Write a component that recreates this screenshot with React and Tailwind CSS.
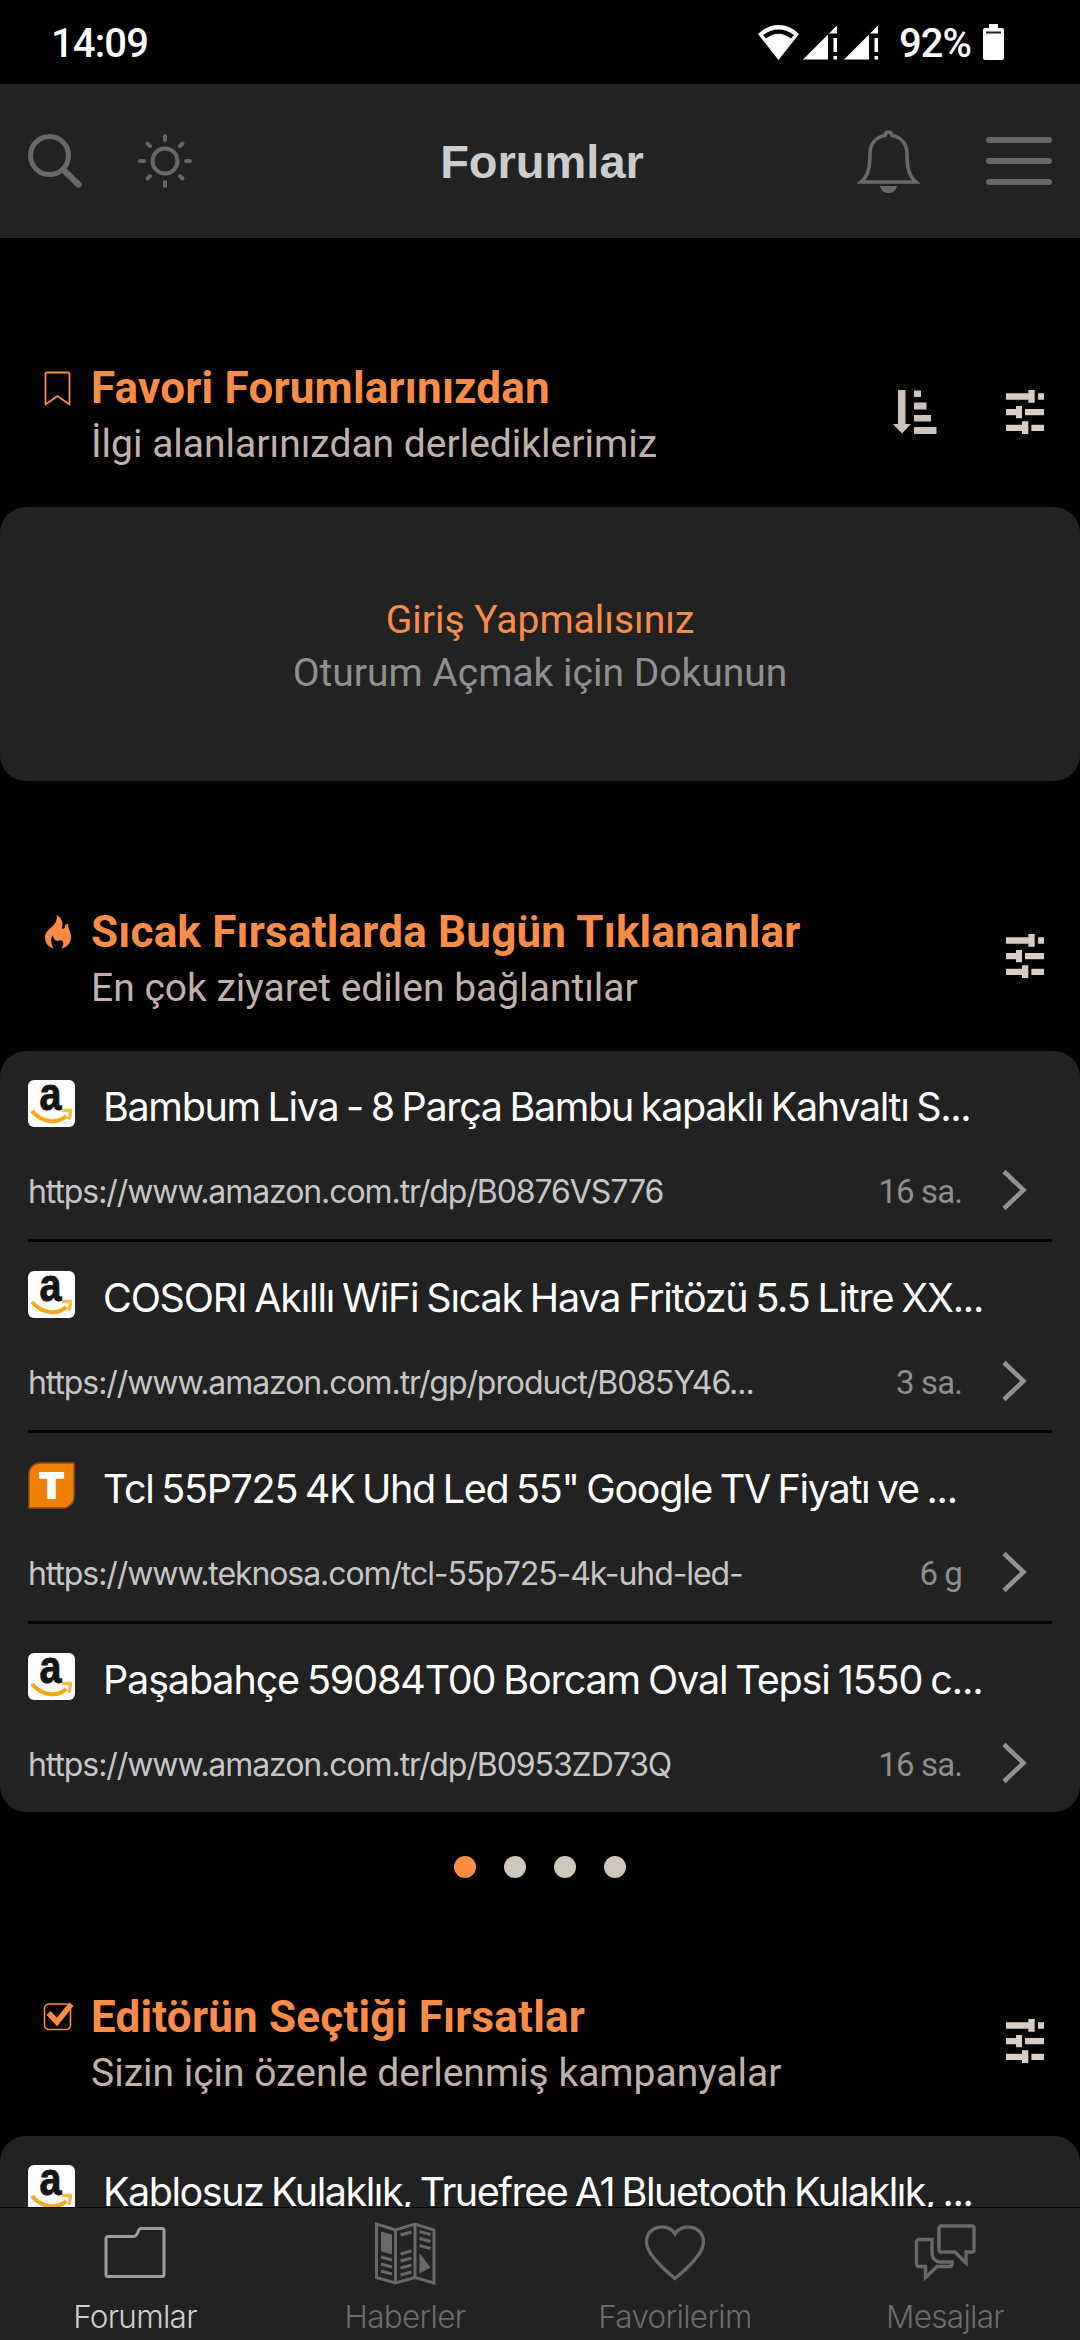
import React from 'react'

const hotDeals = [
  { logo: 'amazon', title: 'Bambum Liva - 8 Parça Bambu kapaklı Kahvaltı S...', tracking: 'tracking-[-1.330px]', url: 'https://www.amazon.com.tr/dp/B0876VS776', time: '16 sa.' },
  { logo: 'amazon', title: 'COSORI Akıllı WiFi Sıcak Hava Fritözü 5.5 Litre XX...', tracking: 'tracking-[-1.220px]', url: 'https://www.amazon.com.tr/gp/product/B085Y46...', time: '3 sa.' },
  { logo: 'teknosa', title: 'Tcl 55P725 4K Uhd Led 55" Google TV Fiyatı ve ...', tracking: 'tracking-[-1.330px]', url: 'https://www.teknosa.com/tcl-55p725-4k-uhd-led-', time: '6 g' },
  { logo: 'amazon', title: 'Paşabahçe 59084T00 Borcam Oval Tepsi 1550 c...', tracking: 'tracking-[-1.130px]', url: 'https://www.amazon.com.tr/dp/B0953ZD73Q', time: '16 sa.' }
]

const editorDeals = [
  { logo: 'amazon', title: 'Kablosuz Kulaklık, Truefree A1 Bluetooth Kulaklık, ...', tracking: 'tracking-[-1.470px]' }
]

const SignalIcon = () => (
  <svg width="35" height="35" viewBox="0 0 35 35" fill="#fff">
    <path d="M0 34.5 25 9.500V34.500Z" />
    <path d="M26 8.500 34 .5V8.500Z" />
    <path d="M30.500 13h3.500v14h-3.500zM30.500 31h3.500v3.500h-3.500z" />
  </svg>
)

const StatusBar = () => (
  <div className="h-[84px] flex items-center justify-between pl-[51px] pr-[76px] text-white">
    <span className="pt-[3px] text-[40px] leading-none font-medium tracking-[-0.900px]">14:09</span>
    <div className="flex items-center">
      <svg width="41" height="35" viewBox="0 0 41 35" className="mr-1">
        <path d="M0 9C12 -3 29 -3 41 9L20.500 35Z" fill="#fff" />
        <path d="M5 10C14 2.500 27 2.500 36 10L33 13.500C25 7 16 7 8 13.500Z" fill="#000" />
      </svg>
      <SignalIcon />
      <div className="w-[6px]" />
      <SignalIcon />
      <span className="pt-[3px] ml-[20px] mr-[12px] text-[40px] leading-none font-medium tracking-[-1px]">92%</span>
      <svg width="21" height="36" viewBox="0 0 21 36">
        <path d="M6 0h9v4h4a2 2 0 0 1 2 2v28a2 2 0 0 1-2 2H2a2 2 0 0 1-2-2V6a2 2 0 0 1 2-2h4z" fill="#fff" />
        <rect x="3" y="7.500" width="15" height="2" fill="#222" />
      </svg>
    </div>
  </div>
)

const Header = () => (
  <header className="h-[154px] shrink-0 bg-[#222] grid grid-cols-3 items-center px-7 text-[#686868]">
    <div className="flex items-center gap-14">
      <svg width="54" height="54" viewBox="0 0 54 54" fill="none" stroke="currentColor" strokeLinecap="round">
        <circle cx="21.500" cy="21.500" r="19" strokeWidth="5" />
        <path d="M35.500 36 50.500 50.500" strokeWidth="6.500" />
      </svg>
      <svg width="54" height="54" viewBox="0 0 54 54" fill="none" stroke="currentColor" strokeWidth="4" strokeLinecap="round">
        <circle cx="27" cy="27" r="12.500" />
        <path d="M27 2v4M27 48v4M2 27h4M48 27h4M9.500 9.500l2.500 2.500M42 42l2.500 2.500M9.500 44.500l2.500-2.500M42 12l2.500-2.500" />
      </svg>
    </div>
    <h1 className="pt-px pl-1 text-center font-bold text-[47px] leading-none text-[#ccc] font-['Liberation_Sans',sans-serif]">Forumlar</h1>
    <div className="flex items-center justify-end gap-[66px]">
      <svg width="63" height="63" viewBox="0 0 63 63" fill="none" stroke="currentColor" strokeWidth="3.600">
        <path d="M28 5.500C28.500 1 34.500 1 35 5.500C45 7.500 50 14.500 50 24C50 38 52 46 59 52H4C11 46 13 38 13 24C13 14.500 18 7.500 28 5.500Z" />
        <path d="M23 56h17c-1 4.500-4 7-8.500 7s-7.500-2.500-8.500-7z" fill="currentColor" stroke="none" />
      </svg>
      <div className="flex flex-col gap-[15px]">
        <div className="w-[66px] h-[6px] rounded-full bg-current" />
        <div className="w-[66px] h-[6px] rounded-full bg-current" />
        <div className="w-[66px] h-[6px] rounded-full bg-current" />
      </div>
    </div>
  </header>
)

const TuneIcon = () => (
  <svg width="38" height="44" viewBox="0 0 114 132" fill="#d7ccc6">
    <path d="M0 10h67v19H0zM67 0h19v38H67zM96 10h18v19H96z" />
    <path d="M0 57h30v19H0zM30 48h18v37H30zM57 57h57v19H57z" />
    <path d="M0 104h48v19H0zM48 94h19v38H48zM76 104h38v19H76z" />
  </svg>
)

const SortIcon = () => (
  <svg width="44" height="44" viewBox="0 0 44 44" fill="#cdc2bc">
    <path d="M5 0h7.500v34H18L9 43.500 0 34h5z" />
    <path d="M21 0.500h7V7H21zM21 12.500h12.500V19.500H21zM21 25h17v6.500H21zM21 37h22.500V44H21z" />
  </svg>
)

const BookmarkIcon = () => (
  <svg width="30" height="35" viewBox="0 0 30 35" fill="none" stroke="#fb8c46" strokeWidth="1.800" strokeLinejoin="round">
    <path d="M2.500 33.500V3a1.500 1.500 0 0 1 1.500-1.500h21A1.500 1.500 0 0 1 26.500 3v30.500L14.500 25z" />
  </svg>
)

const FlameIcon = () => (
  <svg width="26" height="34" viewBox="27 27 78 102" fill="#fb8c46" className="ml-[2px]">
    <path d="M62 27C76 34 84 50 77 67C83 70 88 65 87 60C88 56 92 54 97 54C94 64 105 76 105 92C105 110 94 124 76 127C84 118 84 108 76 103C68 104 56 106 55 98C52 95 50 90 53 87C46 90 44 100 46 108C46 116 50 124 54 128C38 124 27 112 27 94C27 80 36 74 46 64C60 52 64 42 62 27Z" />
  </svg>
)

const CheckIcon = () => (
  <svg width="32" height="35" viewBox="0 0 32 35" fill="none" stroke="#fb8c46">
    <rect x="1.500" y="4" width="26" height="25.500" rx="4.500" strokeWidth="1.600" />
    <path d="M5.500 13l8.500 9L28.500 4" strokeWidth="5.500" />
  </svg>
)

const SectionHeader = ({ icon, title, subtitle, sortable }) => (
  <div className="flex pl-[43px] pr-[36px] pb-[37px]">
    <div className="w-[48px] pt-[9px]">{icon}</div>
    <div className="flex-1">
      <h2 className="text-[44px] leading-[52px] font-bold tracking-[0.200px] text-[#fb8c46] whitespace-nowrap">{title}</h2>
      <p className="mt-1 text-[39px] leading-[52px] text-[#c0b2aa] whitespace-nowrap">{subtitle}</p>
    </div>
    <div className="flex gap-[69px] pt-[28px]">
      {sortable && <SortIcon />}
      <TuneIcon />
    </div>
  </div>
)

const AmazonLogo = () => (
  <svg width="47" height="47" viewBox="0 0 47 47">
    <rect width="47" height="47" rx="6" fill="#fff" />
    <text transform="translate(22.500 29.500) scale(.84 1)" textAnchor="middle" fontFamily="Liberation Sans, sans-serif" fontWeight="700" fontSize="47" fill="#151515" stroke="#151515" strokeWidth="1">a</text>
    <path d="M4 31C14 43 30 44 38 36" fill="none" stroke="#ffa618" strokeWidth="4" />
    <path d="M34 30.500h8.500c0 4-.5 6-2 9" fill="none" stroke="#ffb94c" strokeWidth="3.500" />
  </svg>
)

const TeknosaLogo = () => (
  <svg width="47" height="47" viewBox="0 0 47 47">
    <path d="M12 1h34v34a11 11 0 0 1-11 11H1V12A11 11 0 0 1 12 1z" fill="#f08000" stroke="#8c5010" strokeWidth="1.500" />
    <text x="23.500" y="36" textAnchor="middle" fontFamily="DejaVu Sans, sans-serif" fontWeight="700" fontSize="34" fill="#fff" stroke="#fff" strokeWidth="2">T</text>
  </svg>
)

const DealRow = ({ deal }) => (
  <div className="h-[191px] last:h-[188px] pt-[29px]">
    <div className="flex items-start gap-[28px] h-[47px]">
      {deal.logo === 'amazon' ? <AmazonLogo /> : <TeknosaLogo />}
      <span className={`mt-[4px] font-['Inter',sans-serif] text-[39.500px] leading-[47px] [word-spacing:-2px] text-white whitespace-nowrap ${deal.tracking}`}>{deal.title}</span>
    </div>
    {deal.url && (
      <div className="mt-[43px] h-[40px] flex items-center">
        <span className="flex-1 pt-[3px] font-['Inter',sans-serif] text-[32px] leading-[40px] tracking-[-1.080px] text-[#c6c6c6] whitespace-nowrap">{deal.url}</span>
        <span className="pt-[3px] text-[33px] leading-[40px] tracking-[-0.900px] text-[#8e8e8e]">{deal.time}</span>
        <svg width="26" height="42" viewBox="0 0 26 42" className="ml-[40px] mr-[24px]" fill="none" stroke="#929292" strokeWidth="4.500">
          <path d="M2 2.500 21.500 21 2 39.500" />
        </svg>
      </div>
    )}
  </div>
)

const DealCard = ({ deals }) => (
  <div className="bg-[#222] rounded-[26px] px-7 divide-y-[3px] divide-black">
    {deals.map(deal => (
      <DealRow key={deal.title} deal={deal} />
    ))}
  </div>
)

const FolderIcon = () => (
  <svg width="64" height="64" viewBox="0 0 64 64" fill="none" stroke="#9d9d9d" strokeWidth="3">
    <path d="M5 15.500h25c6 0 4-8 8-8h21a2 2 0 0 1 2 2v44a2 2 0 0 1-2 2H5a2 2 0 0 1-2-2v-36a2 2 0 0 1 2-2z" />
  </svg>
)

const NewsIcon = () => (
  <svg width="64" height="64" viewBox="0 0 64 64" fill="none" stroke="#686868" strokeWidth="3">
    <path d="M3.500 3 22.500 9 42 3 61 9V62L42 56.500 22.500 62 3.500 56.500ZM22.500 9V62M42 3V56.500" />
    <path d="M8 10.500l11 3V33.500l-11-3z" fill="#686868" stroke="none" />
    <path d="M8 36l11 3M8 43l11 3M8 50l11 3M27.500 14l11-3M27.500 33l11-3M27.500 40l11-3M27.500 47l11-3M27.500 54l11-3M46.500 10.500l11 3M46.500 17.500l11 3M46.500 24.500l11 3" />
    <path d="M46.500 32 57.500 46.500 46.500 52.500z" fill="#686868" stroke="none" />
  </svg>
)

const HeartIcon = () => (
  <svg width="64" height="64" viewBox="0 0 64 64" fill="none" stroke="#686868" strokeWidth="3.400">
    <path d="M32 57.500C18 46 3.500 32 3.500 21C3.500 4.500 25 1 32 13C39 1 60.500 4.500 60.500 21C60.500 32 46 46 32 57.500Z" />
  </svg>
)

const ChatIcon = () => (
  <svg width="64" height="64" viewBox="0 0 64 64" fill="none" stroke="#686868" strokeWidth="3.400">
    <path d="M28 5h31a2 2 0 0 1 2 2v22a2 2 0 0 1-2 2h-6v11L42 31H28a2 2 0 0 1-2-2V7a2 2 0 0 1 2-2z" />
    <path d="M19 18.500H6a2.500 2.500 0 0 0-2.500 2.500v22a2.500 2.500 0 0 0 2.500 2.500h6.500v11L24 45.500h13a2 2 0 0 0 2-2V41H27c-4 0-8-4-8-8z" />
  </svg>
)

const tabs = [
  { label: 'Forumlar', icon: <FolderIcon />, active: true },
  { label: 'Haberler', icon: <NewsIcon /> },
  { label: 'Favorilerim', icon: <HeartIcon /> },
  { label: 'Mesajlar', icon: <ChatIcon /> }
]

const TabBar = () => (
  <nav className="h-[133px] shrink-0 border-t border-black bg-[#222] grid grid-cols-4">
    {tabs.map(tab => (
      <div key={tab.label} className="flex flex-col items-center pt-[13px]">
        {tab.icon}
        <span className={`mt-[13px] font-['Inter',sans-serif] font-light text-[31.500px] leading-[38px] tracking-[-0.700px] ${tab.active ? 'text-[#cfcfcf]' : 'text-[#6c6c6c]'}`}>{tab.label}</span>
      </div>
    ))}
  </nav>
)

const App = () => {
  return (
    <div className="w-[1080px] h-[2340px] flex flex-col overflow-hidden bg-black font-['Roboto',sans-serif]">
      <StatusBar />
      <Header />

      <main className="flex-1 min-h-0 overflow-hidden">
        {/* Favorites */}
        <section className="pt-[124px]">
          <SectionHeader icon={<BookmarkIcon />} title="Favori Forumlarınızdan" subtitle="İlgi alanlarınızdan derlediklerimiz" sortable />
          <div className="h-[274px] pt-[6px] rounded-[26px] bg-[#222] flex flex-col items-center justify-center text-[39px] leading-[53px]">
            <p className="text-[#fb8c46]">Giriş Yapmalısınız</p>
            <p className="text-[#8f8f8f]">Oturum Açmak için Dokunun</p>
          </div>
        </section>

        {/* Hot deals */}
        <section className="pt-[125px]">
          <SectionHeader icon={<FlameIcon />} title="Sıcak Fırsatlarda Bugün Tıklananlar" subtitle="En çok ziyaret edilen bağlantılar" />
          <DealCard deals={hotDeals} />
          <div className="flex justify-center gap-[28px] pt-[44px]">
            <span className="size-[22px] rounded-full bg-[#fb8c46]" />
            <span className="size-[22px] rounded-full bg-[#cdc8bb]" />
            <span className="size-[22px] rounded-full bg-[#cdc8bb]" />
            <span className="size-[22px] rounded-full bg-[#cdc8bb]" />
          </div>
        </section>

        {/* Editor picks */}
        <section className="pt-[113px]">
          <SectionHeader icon={<CheckIcon />} title="Editörün Seçtiği Fırsatlar" subtitle="Sizin için özenle derlenmiş kampanyalar" />
          <DealCard deals={editorDeals} />
        </section>
      </main>

      <TabBar />
    </div>
  )
}

export default App
